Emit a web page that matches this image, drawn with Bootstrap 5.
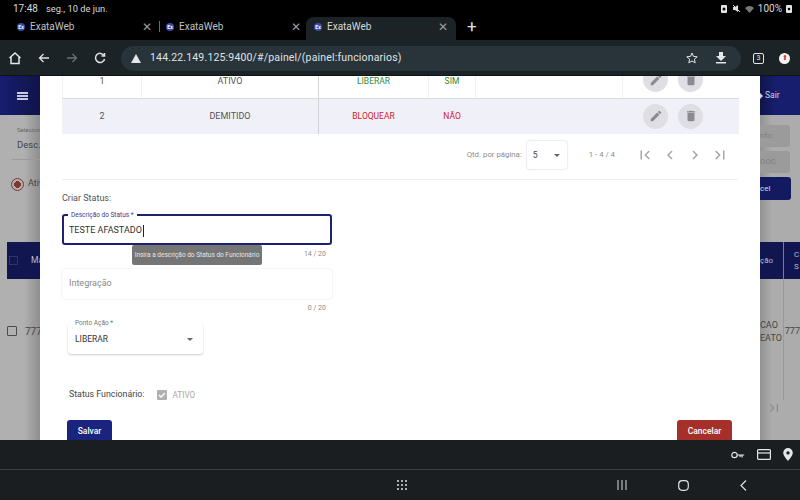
<!DOCTYPE html>
<html lang="pt-BR">
<head>
<meta charset="UTF-8">
<title>ExataWeb</title>
<link rel="stylesheet" href="https://cdn.jsdelivr.net/npm/bootstrap@5.3.0/dist/css/bootstrap.min.css">
<style>
html, body { width: 800px; height: 500px; overflow: hidden; background: #000; }
body, button, input, table { font-family: Roboto, "Liberation Sans", sans-serif; }

/* barra de status + abas */
.chrome-top { height: 40px; background: #000; color: #d8dadb; }
.status-line { height: 17px; padding: 0 8px 0 13px; font-size: 9.3px; line-height: 15px; }
.status-line .clock { margin-right: 8px; font-size: 10px; }
.status-pct { font-size: 10px; }
.tab-line { height: 23px; padding-left: 12px; font-size: 10px; }
.tab-item { width: 148px; height: 23px; padding: 0 8px 4px 5px; color: #bfc3c5; }
.tab-item.on { width: 150px; margin-left: -3px; padding-left: 8px; background: #1c2327; border-radius: 8px 8px 0 0; color: #d5d8d9; }
.tab-fav { width: 8px; height: 8px; border-radius: 50%; background: #3c4aa8; margin-right: 5px; color: #fff; font-size: 5px; line-height: 8px; text-align: center; font-weight: 700; flex: none; }
.tab-x { margin-left: auto; font-size: 12px; line-height: 1; color: #9a9d9f; }
.tab-sep { width: 1px; height: 11px; background: #6a6d6f; margin: 0 1px 4px -1px; }
.tab-plus { font-size: 17px; line-height: 1; margin: 0 0 4px 11px; color: #dfe1e2; }

.url-line { height: 36px; background: #1c2327; border-bottom: 1px solid #101417; padding: 1px 10px 0 8px; color: #e4e6e7; }
.url-pill { width: 620px; height: 25px; margin-left: 15px; background: #28343a; border-radius: 13px; padding: 0 14px 0 10px; font-size: 10.5px; letter-spacing: .17px; color: #dfe3e5; }
.url-txt { margin-left: 9px; }
.url-star { margin-left: auto; }
.url-down { margin-left: 17px; }
.url-line svg { flex: none; display: block; }
.tab-count { width: 11px; height: 11px; border: 1px solid #e4e6e7; border-radius: 2px; font-size: 7px; line-height: 9px; text-align: center; margin-left: 12px; }
.rec-dot { width: 11px; height: 11px; margin-left: 15px; border-radius: 50%; background: #f4f4f4; color: #d0342c; font-size: 7px; line-height: 10px; text-align: center; }

/* area da pagina */
.page-area { height: 364px; overflow: hidden; background: #ababab; }
.back-strip { width: 40px; flex: none; overflow: hidden; background: #ababab; color: #444; font-size: 8.5px; }
.back-strip.lft { background: linear-gradient(90deg, #b0b0b0 60%, #8e8e8e); }
.back-strip.rgt { background: linear-gradient(90deg, #939393, #acacac 30%); }
.back-nav { height: 39px; background: #161c64; color: #cfd1e6; }
.lft .back-nav { background: linear-gradient(90deg, #171e6e, #10144a); }
.rgt .back-nav { background: linear-gradient(90deg, #10144a, #171e6e 40%); }
.burger { width: 11px; height: 8px; margin-left: 17px; border-top: 2px solid #c9cbdc; border-bottom: 2px solid #c9cbdc; position: relative; }
.burger::after { content: ""; position: absolute; left: 0; right: 0; top: 1px; height: 2px; background: #c9cbdc; }
.back-head { height: 37px; background: #121650; color: #b9bbd0; }
.lft .back-head { margin: 52px 0 0 7px; padding-left: 2px; }
.rgt .back-head { margin-top: 42px; }
.back-box { width: 10px; height: 10px; border: 1.5px solid #4c4c4c; border-radius: 1px; flex: none; }
.head-box { width: 9px; height: 9px; border: 1.5px solid #30356e; margin-right: 13px; flex: none; }
.desc-lbl { font-size: 6px; margin: 10px 0 0 17px; color: #666; line-height: 10px; white-space: nowrap; }
.desc-val { font-size: 9.5px; margin: 3px 0 0 17px; color: #444; line-height: 14px; white-space: nowrap; }
.desc-line { height: 1px; background: #9a9a9a; margin: 7px 0 0 12px; }
.radio-line { margin: 18px 0 0 11px; height: 12px; font-size: 9px; color: #444; white-space: nowrap; }
.radio-ring { width: 13px; height: 13px; border: 1.5px solid #7d3730; border-radius: 50%; margin-right: 4px; flex: none; background: radial-gradient(#7d3730 42%, transparent 46%); }
.row-line { margin: 45px 0 0 7px; height: 14px; font-size: 10px; color: #444; white-space: nowrap; }
.sair-txt { margin-left: 2px; }
.sair-arrow { display: block; margin-right: 0; flex: none; }
.grey-btn { height: 22px; width: 30px; margin-top: 4px; background: #9b9b9b; border-radius: 0 3px 3px 0; font-size: 8px; line-height: 22px; color: #7e7e7e; }
.grey-btn.first { margin-top: 10px; }
.navy-btn { height: 23px; width: 31px; margin-top: 4px; background: #141a60; border-radius: 0 3px 3px 0; font-size: 8px; line-height: 23px; color: #d5d6e6; }
.head-cell-a { width: 24px; border-right: 1px solid #777aa0; font-size: 8px; line-height: 37px; }
.head-cell-b { width: 16px; padding-left: 10px; font-size: 8px; line-height: 12px; }
.row-cols { height: 121px; font-size: 9px; color: #444; line-height: 13px; }
.rc-a { width: 24px; border-right: 1px solid #9a9a9a; padding-top: 40px; }
.rc-b { padding: 46px 0 0 1px; white-space: nowrap; }
.last-ico { display: block; margin: 0 0 0 6px; }

/* modal */
.modal-sheet { width: 720px; flex: none; background: #fff; overflow: hidden; color: #333; }
.sheet-scroll { margin-top: -14px; padding: 0 22px; }
.status-table { table-layout: fixed; width: 676px; font-size: 9px; margin: 0; color: #444; }
.status-table td { height: 36px; padding: 0; text-align: center; vertical-align: middle; border-bottom: 1px solid #dcdcdc; border-left: 1px solid #f2f2f6; background: transparent; color: #555; }
.status-table tr.top-row td { padding-top: 4px; }
.status-table tr.shade td { background: #f0f0f9; border-bottom: 0; border-top: 1px solid #dcdcdc; }
.status-table td.div-l { border-left: 1px solid #d4d4d8; }
.status-table td.acts { text-align: left; padding-left: 20px; white-space: nowrap; }
.status-table tr.top-row td.acts { padding-top: 0; }
.col-n { width: 79px; } .col-d { width: 177px; } .col-p { width: 110px; } .col-s { width: 47px; } .col-e { width: 147px; } .col-a { width: 116px; }
.txt-ok { color: #2e8b37; font-size: 8.5px; }
.txt-bad { color: #d3202c; font-size: 8.5px; }
.act-ico { width: 25px; height: 25px; border-radius: 50%; background: #dedee4; border: 0; padding: 0; margin-right: 10px; }
.pager { height: 45px; padding: 0 9px 4px 0; margin-top: 1px; border-bottom: 1px solid #eee; font-size: 7.8px; color: #8c8c8c; width: 676px; }
.pg-select { width: 40px; height: 28px; border-radius: 3px; box-shadow: 0 0 2px rgba(0,0,0,.25); margin-left: 5px; padding: 0 7px 0 6px; color: #444; font-size: 8.5px; }
.caret { width: 0; height: 0; border-left: 3.5px solid transparent; border-right: 3.5px solid transparent; border-top: 3.5px solid #666; margin-left: auto; }
.pg-count { margin: 0 21px 0 22px; }
.pg-icons { gap: 7px; }
.form-cap { font-size: 9px; margin-top: 12px; line-height: 12px; color: #555; }
.field-box { width: 270px; position: relative; font-size: 9px; color: #333; }
.field-on { height: 31px; margin-top: 10px; border: 2px solid #1c2270; border-radius: 3px; padding: 2px 5px 0; }
.float-lbl { position: absolute; left: 4px; top: -5px; background: #fff; padding: 0 3px; font-size: 6.5px; line-height: 8px; color: #3a4190; white-space: nowrap; }
.caret-bar { width: 1px; height: 12px; background: #222; margin-left: 1px; }
.hint-tip { position: absolute; left: 68px; top: 29px; width: 130px; height: 20px; background: #757575; color: #e6e6e6; border-radius: 2px; font-size: 6.5px; line-height: 20px; text-align: center; white-space: nowrap; z-index: 2; }
.count-txt { width: 264px; text-align: right; font-size: 7px; line-height: 9px; color: #8a8a8a; margin-top: 5px; }
.field-off { height: 30px; margin-top: 10px; border-radius: 3px; box-shadow: 0 0 2px rgba(0,0,0,.14); padding: 0 7px; color: #8a8a8a; font-size: 9px; }
.select-box { width: 135px; height: 31px; margin: 10px 0 0 6px; border-radius: 3px; box-shadow: 0 1px 2px rgba(0,0,0,.2); padding: 2px 10px 0 7px; position: relative; font-size: 8.5px; color: #333; }
.select-box .float-lbl { color: #777; left: 4px; top: -4px; }
.active-line { margin: 35px 0 0 7px; height: 12px; font-size: 8.8px; color: #444; }
.chk-off { width: 10px; height: 10px; margin-left: 13px; background: #b0b0b0; border-radius: 1px; color: #fff; flex: none; }
.chk-txt { margin-left: 5px; color: #a9a9a9; font-size: 8.2px; }
.foot-btns { margin: 19px 6px 0 5px; }
.btn-save, .btn-stop { height: 22px; border: 0; border-radius: 3px; color: #fff; font-size: 8.5px; font-weight: 500; padding: 0; }
.btn-save { width: 45px; background: #1a237e; }
.btn-stop { width: 55px; background: #a5302a; }

/* barras inferiores */
.key-bar { height: 30px; background: #1a1e21; border-bottom: 1px solid #3d4042; padding-right: 7px; gap: 12px; }
.nav-bar { height: 30px; background: #1a1e21; position: relative; color: #d9dadb; }
.nav-bar svg { display: block; }
.nv-apps { margin-left: 397px; }
.nv-recent { margin-left: 209px; }
.nv-home { margin-left: 51px; }
.nv-back { margin-left: 51px; }
</style>
</head>
<body>
<div class="chrome-top">
  <div class="status-line d-flex align-items-center">
    <span class="clock">17:48</span><span>seg., 10 de jun.</span>
    <div class="ms-auto d-flex align-items-center gap-1">
      <svg width="7" height="9" viewBox="0 0 7 9"><rect width="6" height="8" y="1" rx="1" fill="#e4e4e4"/><circle cx="3" cy="5" r="1.5" fill="#000"/></svg>
      <svg width="9" height="9" viewBox="0 0 9 9"><path d="M1 3h2l3-2v7L3 6H1z" fill="#ddd"/><path d="M1 1l7 7" stroke="#ddd"/></svg>
      <svg width="9" height="8" viewBox="0 0 9 8"><path d="M0 3a6 6 0 0 1 9 0L4.500 8z" fill="#777"/></svg>
      <span class="status-pct">100%</span>
      <svg width="6" height="9" viewBox="0 0 6 9"><rect width="6" height="8" y="1" rx="1" fill="#e4e4e4"/><circle cx="3" cy="5" r="1.300" fill="#000"/></svg>
    </div>
  </div>
  <div class="tab-line d-flex align-items-center">
    <div class="tab-item d-flex align-items-center"><span class="tab-fav">Ex</span>ExataWeb<span class="tab-x">✕</span></div>
    <span class="tab-sep"></span>
    <div class="tab-item d-flex align-items-center"><span class="tab-fav">Ex</span>ExataWeb<span class="tab-x">✕</span></div>
    <div class="tab-item on d-flex align-items-center"><span class="tab-fav">Ex</span>ExataWeb<span class="tab-x">✕</span></div>
    <span class="tab-plus">+</span>
  </div>
</div>

<div class="url-line d-flex align-items-center">
  <svg width="14" height="14" viewBox="0 0 14 14" fill="none" stroke="#e4e6e7" stroke-width="1.500"><path d="M1.500 7L7 2l5.500 5M3 6v6.500h8V6"/></svg>
  <svg class="ms-3" width="12" height="12" viewBox="0 0 12 12" fill="none" stroke="#dfe1e2" stroke-width="1.300"><path d="M11 6H1.500M5.500 2L1.500 6l4 4"/></svg>
  <svg class="ms-3" width="12" height="12" viewBox="0 0 12 12" fill="none" stroke="#6b7073" stroke-width="1.300"><path d="M1 6h9.500M6.500 2l4 4-4 4"/></svg>
  <svg class="ms-3" width="12" height="12" viewBox="0 0 12 12" fill="none" stroke="#dfe1e2" stroke-width="1.500"><path d="M10 3.500A4.600 4.600 0 1 0 10.600 7"/><path d="M10.500 1v3h-3" /></svg>
  <div class="url-pill d-flex align-items-center">
    <svg width="10" height="9" viewBox="0 0 10 9"><path d="M5 0l5 9H0z" fill="#e4e6e7"/></svg>
    <span class="url-txt">144.22.149.125:9400/#/painel/(painel:funcionarios)</span>
    <svg class="url-star" width="12" height="12" viewBox="0 0 12 12" fill="none" stroke="#e4e6e7" stroke-width="1"><path d="M6 1l1.500 3.400 3.700.4-2.800 2.400.8 3.600L6 9l-3.200 1.800.8-3.600L.8 4.800l3.700-.4z"/></svg>
    <svg class="url-down" width="12" height="12" viewBox="0 0 12 12" fill="#e4e6e7"><path d="M4 0h4v4h3L6 9 1 4h3zM1 10h10v1.500H1z"/></svg>
  </div>
  <div class="tab-count">3</div>
  <div class="rec-dot">⬆</div>
</div>

<div class="page-area d-flex">
  <div class="back-strip lft">
    <div class="back-nav d-flex align-items-center"><div class="burger"></div></div>
    <div class="desc-lbl">Selecionar</div>
    <div class="desc-val">Desc.:</div>
    <div class="desc-line"></div>
    <div class="radio-line d-flex align-items-center"><span class="radio-ring"></span>Ativ</div>
    <div class="back-head d-flex align-items-center"><span class="head-box"></span>Ma</div>
    <div class="row-line d-flex align-items-center"><span class="back-box me-2"></span>777</div>
  </div>

  <div class="modal-sheet">
    <div class="sheet-scroll">
      <table class="status-table">
        <colgroup><col class="col-n"><col class="col-d"><col class="col-p"><col class="col-s"><col class="col-e"><col class="col-a"></colgroup>
        <tr class="top-row">
          <td>1</td><td>ATIVO</td><td class="div-l"><span class="txt-ok">LIBERAR</span></td><td><span class="txt-ok">SIM</span></td><td></td>
          <td class="acts">
            <button class="act-ico"><svg width="14" height="14" viewBox="0 0 24 24" fill="#8b8b8f"><path d="M3 17.250V21h3.750L17.810 9.940l-3.750-3.750L3 17.250zM20.710 7.040c.39-.39.39-1.020 0-1.410l-2.340-2.340c-.39-.39-1.020-.39-1.410 0l-1.830 1.830 3.750 3.750 1.830-1.830z"/></svg></button><button class="act-ico"><svg width="14" height="14" viewBox="0 0 24 24" fill="#8b8b8f"><path d="M6 19c0 1.100.9 2 2 2h8c1.100 0 2-.9 2-2V7H6v12zM19 4h-3.500l-1-1h-5l-1 1H5v2h14V4z"/></svg></button>
          </td>
        </tr>
        <tr class="shade">
          <td>2</td><td>DEMITIDO</td><td class="div-l"><span class="txt-bad">BLOQUEAR</span></td><td><span class="txt-bad">NÃO</span></td><td></td>
          <td class="acts">
            <button class="act-ico"><svg width="14" height="14" viewBox="0 0 24 24" fill="#8b8b8f"><path d="M3 17.250V21h3.750L17.810 9.940l-3.750-3.750L3 17.250zM20.710 7.040c.39-.39.39-1.020 0-1.410l-2.340-2.340c-.39-.39-1.020-.39-1.410 0l-1.830 1.830 3.750 3.750 1.830-1.830z"/></svg></button><button class="act-ico"><svg width="14" height="14" viewBox="0 0 24 24" fill="#8b8b8f"><path d="M6 19c0 1.100.9 2 2 2h8c1.100 0 2-.9 2-2V7H6v12zM19 4h-3.500l-1-1h-5l-1 1H5v2h14V4z"/></svg></button>
          </td>
        </tr>
      </table>

      <div class="pager d-flex align-items-center justify-content-end">
        <span>Qtd. por página:</span>
        <div class="pg-select d-flex align-items-center">5<span class="caret"></span></div>
        <span class="pg-count">1 - 4 / 4</span>
        <div class="pg-icons d-flex">
          <svg width="18" height="18" viewBox="0 0 24 24" fill="#a6a6a6"><path d="M18.410 16.590L13.820 12l4.590-4.590L17 6l-6 6 6 6zM6 6h2v12H6z"/></svg>
          <svg width="18" height="18" viewBox="0 0 24 24" fill="#a6a6a6"><path d="M15.410 7.410L14 6l-6 6 6 6 1.410-1.410L10.830 12z"/></svg>
          <svg width="18" height="18" viewBox="0 0 24 24" fill="#a6a6a6"><path d="M10 6L8.590 7.410 13.170 12l-4.580 4.590L10 18l6-6z"/></svg>
          <svg width="18" height="18" viewBox="0 0 24 24" fill="#a6a6a6"><path d="M5.590 7.410L10.180 12l-4.590 4.590L7 18l6-6-6-6zM16 6h2v12h-2z"/></svg>
        </div>
      </div>

      <div class="form-cap">Criar Status:</div>
      <div class="field-box field-on d-flex align-items-center">
        <span class="float-lbl">Descrição do Status *</span>
        TESTE AFASTADO<span class="caret-bar"></span>
        <span class="hint-tip">Insira a descrição do Status do Funcionário</span>
      </div>
      <div class="count-txt">14 / 20</div>
      <div class="field-box field-off d-flex align-items-center">Integração</div>
      <div class="count-txt">0 / 20</div>
      <div class="select-box d-flex align-items-center">
        <span class="float-lbl">Ponto Ação *</span>
        LIBERAR<span class="caret"></span>
      </div>
      <div class="active-line d-flex align-items-center">
        Status Funcionário:
        <span class="chk-off d-flex align-items-center justify-content-center"><svg width="8" height="8" viewBox="0 0 8 8" fill="none" stroke="#fff" stroke-width="1.300"><path d="M1 4l2 2 4-4"/></svg></span>
        <span class="chk-txt">ATIVO</span>
      </div>
      <div class="foot-btns d-flex justify-content-between">
        <button class="btn-save">Salvar</button>
        <button class="btn-stop">Cancelar</button>
      </div>
    </div>
  </div>

  <div class="back-strip rgt">
    <div class="back-nav d-flex align-items-center"><svg class="sair-arrow" width="3" height="6" viewBox="0 0 3 6" fill="#cfd1e6"><path d="M0 0l3 3-3 3z"/></svg><span class="sair-txt">Sair</span></div>
    <div class="grey-btn first">nfo</div>
    <div class="grey-btn">DOC</div>
    <div class="navy-btn">cel</div>
    <div class="back-head d-flex align-items-center"><span class="head-cell-a">ção</span><span class="head-cell-b">C S</span></div>
    <div class="row-cols d-flex"><div class="rc-a">CAO EATO</div><div class="rc-b">777</div></div>
    <svg class="last-ico" width="16" height="16" viewBox="0 0 24 24" fill="#8f8f8f"><path d="M5.590 7.410L10.180 12l-4.590 4.590L7 18l6-6-6-6zM16 6h2v12h-2z"/></svg>
  </div>
</div>

<div class="key-bar d-flex align-items-center justify-content-end">
  <svg width="14" height="10" viewBox="0 0 14 10" fill="none" stroke="#e4e6e7" stroke-width="1.200"><circle cx="3.500" cy="5" r="2.700"/><path d="M6.200 5h7M11 5v2.500M9 5v2"/></svg>
  <svg width="14" height="11" viewBox="0 0 14 11" fill="none" stroke="#e4e6e7" stroke-width="1.200"><rect x=".6" y=".6" width="12.800" height="9.800" rx="1"/><path d="M.6 4h12.800"/></svg>
  <svg width="10" height="13" viewBox="0 0 10 13"><path fill-rule="evenodd" d="M5 0a4.800 4.800 0 0 1 4.800 4.800C9.800 8 5 13 5 13S.2 8 .2 4.800A4.800 4.800 0 0 1 5 0zm0 3.200a1.700 1.700 0 1 0 0 3.400 1.700 1.700 0 0 0 0-3.400z" fill="#e4e6e7"/></svg>
</div>
<div class="nav-bar d-flex align-items-center">
  <svg class="nv-apps" width="11" height="11" viewBox="0 0 11 11" fill="#dfe0e1"><circle cx="1" cy="1" r="1"/><circle cx="5" cy="1" r="1"/><circle cx="9" cy="1" r="1"/><circle cx="1" cy="5" r="1"/><circle cx="5" cy="5" r="1"/><circle cx="9" cy="5" r="1"/><circle cx="1" cy="9" r="1"/><circle cx="5" cy="9" r="1"/><circle cx="9" cy="9" r="1"/></svg>
  <svg class="nv-recent" width="10" height="10" viewBox="0 0 10 10" stroke="#b9babb" stroke-width="1.200"><path d="M1 0v10M5 0v10M9 0v10"/></svg>
  <svg class="nv-home" width="11" height="11" viewBox="0 0 11 11" fill="none" stroke="#dfe0e1" stroke-width="1.200"><rect x=".7" y=".7" width="9.600" height="9.600" rx="3.500"/></svg>
  <svg class="nv-back" width="7" height="11" viewBox="0 0 7 11" fill="none" stroke="#dfe0e1" stroke-width="1.200"><path d="M6 .5l-5 5 5 5"/></svg>
</div>
<script src="https://cdn.jsdelivr.net/npm/bootstrap@5.3.0/dist/js/bootstrap.bundle.min.js"></script>
</body>
</html>
